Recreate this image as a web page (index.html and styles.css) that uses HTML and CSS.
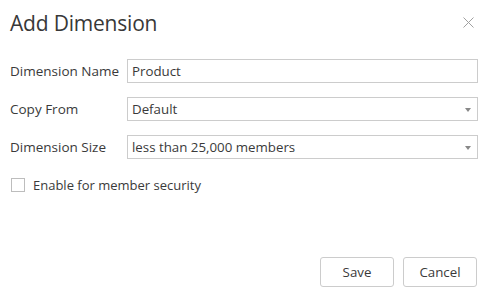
FILE: index.html
```html
<!DOCTYPE html>
<html>
<head>
<meta charset="utf-8">
<link rel="stylesheet" href="styles.css">
</head>
<body>
<div class="dialog">
  <div class="header">
    <h1 class="title">Add Dimension</h1>
    <button class="close" aria-label="Close">
      <svg width="11" height="11" viewBox="0 0 11 11"><path d="M0.5 0.5 L10.5 10.5 M10.5 0.5 L0.5 10.5" stroke="#a0a0a0" stroke-width="1" fill="none"/></svg>
    </button>
  </div>
  <div class="form">
    <div class="row">
      <label class="label">Dimension Name</label>
      <div class="field">Product</div>
    </div>
    <div class="row">
      <label class="label">Copy From</label>
      <div class="field select">Default<span class="caret"></span></div>
    </div>
    <div class="row">
      <label class="label">Dimension Size</label>
      <div class="field select">less than 25,000 members<span class="caret"></span></div>
    </div>
    <div class="check">
      <span class="box"></span>
      <span class="check-label">Enable for member security</span>
    </div>
  </div>
  <div class="footer">
    <button class="btn">Save</button>
    <button class="btn">Cancel</button>
  </div>
</div>
</body>
</html>
```
FILE: styles.css
```css
html, body {
  margin: 0;
  padding: 0;
  background: #fff;
}
body {
  font-family: "Open Sans", "Noto Sans", sans-serif;
  color: #3a3a3a;
}
.dialog {
  width: 488px;
  height: 299px;
  box-sizing: border-box;
  padding: 0 10px 0 10px;
  display: flex;
  flex-direction: column;
}
.header {
  height: 59px;
  display: flex;
  align-items: flex-start;
  justify-content: space-between;
}
.title {
  margin: 9px 0 0 0;
  font-size: 21px;
  line-height: 28px;
  font-weight: normal;
  color: #383838;
  letter-spacing: -0.2px;
}
.close {
  margin: 17px 4px 0 0;
  padding: 0;
  border: 0;
  background: none;
  width: 11px;
  height: 11px;
  display: flex;
}
.form {
  display: flex;
  flex-direction: column;
  gap: 14px;
}
.row {
  display: flex;
  align-items: center;
  height: 24px;
}
.label {
  width: 117px;
  font-size: 13.5px;
}
.field {
  flex: 1;
  height: 24px;
  box-sizing: border-box;
  border: 1px solid #cccccc;
  padding: 0 4px;
  font-size: 13.3px;
  line-height: 22px;
  position: relative;
}
.caret {
  position: absolute;
  right: 6px;
  top: 10px;
  width: 0;
  height: 0;
  border-left: 3px solid transparent;
  border-right: 3px solid transparent;
  border-top: 4px solid #888;
}
.check {
  display: flex;
  align-items: center;
  margin-top: 5px;
  height: 14px;
}
.box {
  width: 12px;
  height: 12px;
  border: 1px solid #bdbdbd;
  margin-left: 1px;
  margin-right: 8px;
}
.check-label {
  font-size: 13px;
}
.footer {
  margin-top: auto;
  margin-bottom: 12px;
  display: flex;
  justify-content: flex-end;
  gap: 9px;
  padding-right: 1px;
}
.btn {
  width: 74px;
  height: 30px;
  border: 1px solid #cccccc;
  border-radius: 3px;
  background: #fff;
  font-family: "Open Sans", "Noto Sans", sans-serif;
  font-size: 13.3px;
  color: #3a3a3a;
  padding: 0;
}
```
